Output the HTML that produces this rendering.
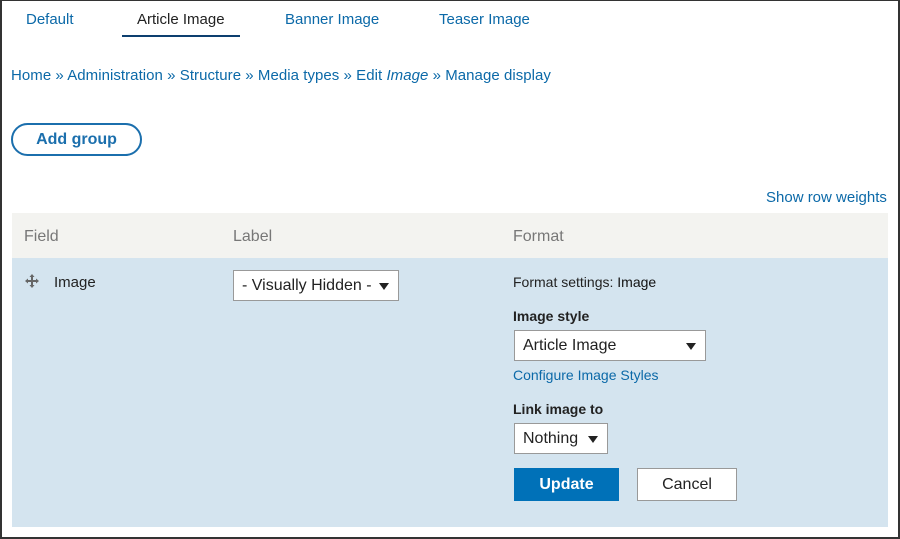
<!DOCTYPE html>
<html><head><style>
*{margin:0;padding:0;box-sizing:border-box}
body{width:900px;height:539px;background:#fff;font-family:"Liberation Sans",sans-serif;position:relative;overflow:hidden}
.frame{position:absolute;left:0;top:0;width:900px;height:539px;border:2px solid #333;border-top:1px solid #333}
.a{position:absolute;white-space:nowrap}
.tab{font-size:15px;color:#0b69a8;top:11px}
.bc{font-size:15px;color:#0b69a8;top:67px;left:11px;letter-spacing:0.05px}
.sel{position:absolute;background:#fff;border:1px solid #999;font-size:16px;color:#222;padding-left:8px;line-height:29px}
.sel:after{content:"";position:absolute;right:9px;top:12px;border-left:5px solid transparent;border-right:5px solid transparent;border-top:7px solid #222}
</style></head><body>
<div class="frame"></div>
<div class="a tab" style="left:26px">Default</div>
<div class="a tab" style="left:137px;color:#222">Article Image</div>
<div class="a" style="left:122px;top:35px;width:118px;height:2px;background:#0d3f6f"></div>
<div class="a tab" style="left:285px">Banner Image</div>
<div class="a tab" style="left:439px">Teaser Image</div>
<div class="a bc">Home » Administration » Structure » Media types » Edit <i>Image</i> » Manage display</div>
<div class="a" style="left:11px;top:123px;width:131px;height:33px;border:2px solid #1b6fad;border-radius:17px;color:#1b6fad;font-weight:bold;font-size:16px;text-align:center;line-height:30px">Add group</div>
<div class="a" style="left:766px;top:189px;font-size:15px;color:#0b69a8">Show row weights</div>
<div class="a" style="left:12px;top:213px;width:876px;height:45px;background:#f3f3f0"></div>
<div class="a" style="left:12px;top:258px;width:876px;height:269px;background:#d4e4ef"></div>
<div class="a" style="left:24px;top:228px;font-size:16px;color:#777">Field</div>
<div class="a" style="left:233px;top:228px;font-size:16px;color:#777">Label</div>
<div class="a" style="left:513px;top:228px;font-size:16px;color:#777">Format</div>
<svg class="a" style="left:24px;top:273px" width="16" height="16" viewBox="0 0 16 16"><path d="M8 1L5.5 4H7v3H4V5.5L1 8l3 2.5V9h3v3H5.5L8 15l2.5-3H9V9h3v1.5L15 8l-3-2.5V7H9V4h1.5z" fill="#666"/></svg>
<div class="a" style="left:54px;top:274px;font-size:15px;color:#222">Image</div>
<div class="sel" style="left:233px;top:270px;width:166px;height:31px">- Visually Hidden -</div>
<div class="a" style="left:513px;top:274px;font-size:14px;color:#222">Format settings: <span style="color:#111">Image</span></div>
<div class="a" style="left:513px;top:308px;font-size:14px;color:#222;font-weight:bold">Image style</div>
<div class="sel" style="left:514px;top:330px;width:192px;height:31px">Article Image</div>
<div class="a" style="left:513px;top:367px;font-size:14px;color:#0b69a8">Configure Image Styles</div>
<div class="a" style="left:513px;top:401px;font-size:14px;color:#222;font-weight:bold">Link image to</div>
<div class="sel" style="left:514px;top:423px;width:94px;height:31px">Nothing</div>
<div class="a" style="left:514px;top:468px;width:105px;height:33px;background:#0071b8;color:#fff;font-weight:bold;font-size:16px;text-align:center;line-height:34px">Update</div>
<div class="a" style="left:637px;top:468px;width:100px;height:33px;background:#fff;border:1px solid #999;color:#222;font-size:16px;text-align:center;line-height:32px">Cancel</div>
</body></html>
